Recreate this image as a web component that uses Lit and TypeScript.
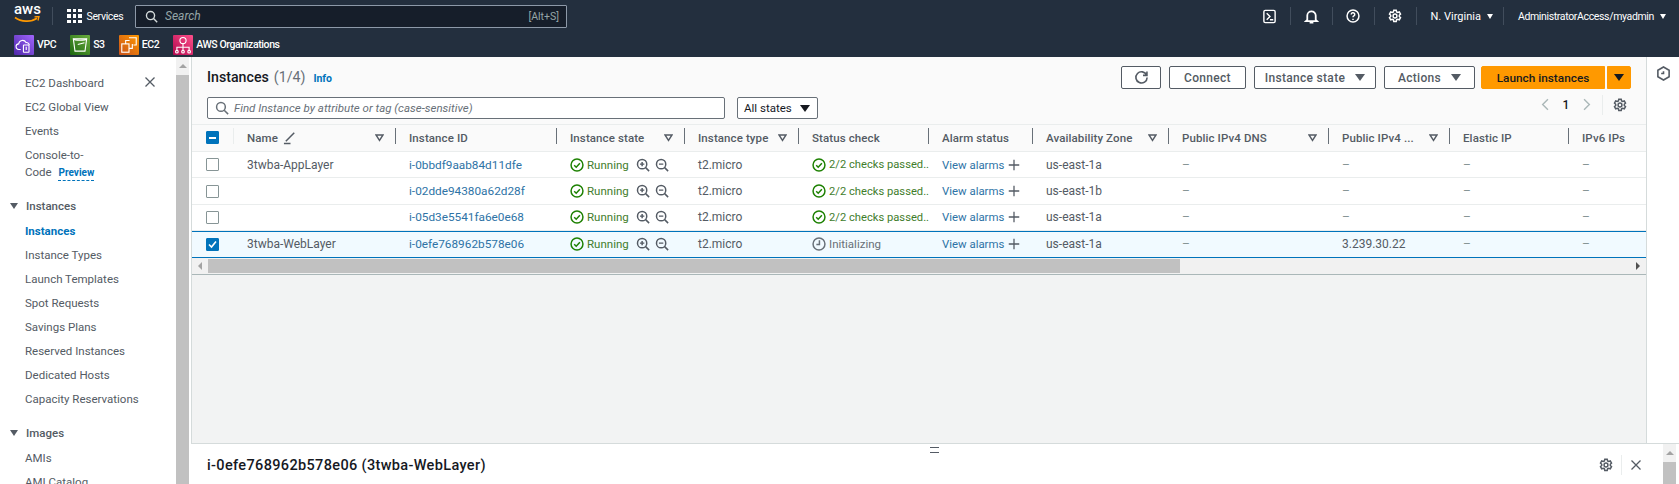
import { LitElement, css, html, svg } from "lit";
import { customElement } from "lit/decorators.js";

const icon = (body: unknown, size = 14, cls = "") => html`<svg class="ic ${cls}" width=${size} height=${size} viewBox="0 0 16 16" fill="none" stroke="currentColor" stroke-width="1.7">${body}</svg>`;

const gear = svg`<circle cx="8" cy="8" r="2.2"/><path d="M6.6 1.5h2.8l.4 1.8 1.3.7 1.8-.6 1.4 2.4-1.4 1.3v1.5l1.4 1.2-1.4 2.5-1.8-.6-1.3.7-.4 1.8H6.6l-.4-1.8-1.3-.7-1.8.6-1.4-2.5 1.4-1.2V7.100L1.700 5.800l1.400-2.400 1.800.6 1.300-.7z"/>`;
const close = svg`<path d="M2 2l12 12M14 2L2 14"/>`;
const search = svg`<circle cx="6.800" cy="6.800" r="5"/><path d="M10.500 10.500L15 15"/>`;
const checkCircle = svg`<circle cx="8" cy="8" r="6.800"/><path d="M4.800 8.200l2.300 2.300 4.200-4.600"/>`;
const zoomIn = svg`<circle cx="7" cy="7" r="5.300"/><path d="M11 11l4 4M4.500 7h5M7 4.500v5"/>`;
const zoomOut = svg`<circle cx="7" cy="7" r="5.300"/><path d="M11 11l4 4M4.500 7h5"/>`;
const clock = svg`<circle cx="8" cy="8" r="6.800"/><path d="M8.500 3.800v4.700H5"/>`;
const plus = svg`<path d="M8 1v14M1 8h14"/>`;

const navLeft = [
  { name: "VPC", cls: "vpc", glyph: svg`<path d="M6 13H4.500a2.500 2.500 0 0 1-.3-5 3.500 3.500 0 0 1 6.600-1.200 2.600 2.600 0 0 1 3 2.200"/><rect x="8.500" y="9" width="5" height="6.500" rx=".5"/><path d="M11 10.500v3"/>` },
  { name: "S3", cls: "s3", glyph: svg`<path d="M3 3.500h12l-1.500 11h-9z"/><path d="M3 3.500c1 1.600 11 1.600 12 0M7 8.500l6-1.500"/>` },
  { name: "EC2", cls: "ec2", glyph: svg`<rect x="2.500" y="8" width="6.500" height="7.500"/><path d="M6 8V5h3.500M9 12h3V8M9 2.500h6.500V9H13"/>` },
  { name: "AWS Organizations", cls: "org", glyph: svg`<circle cx="9" cy="5" r="2.800"/><path d="M9 8v3M3.500 14v-3h11v3M9 11v3"/><circle cx="3.500" cy="15" r="1.200"/><circle cx="9" cy="15" r="1.200"/><circle cx="14.500" cy="15" r="1.200"/>` },
];

const sideTop = ["EC2 Dashboard", "EC2 Global View", "Events"];
const sideInstances = ["Instance Types", "Launch Templates", "Spot Requests", "Savings Plans", "Reserved Instances", "Dedicated Hosts", "Capacity Reservations"];

const columns = [
  { label: "Name", sort: true, edit: true },
  { label: "Instance ID" },
  { label: "Instance state", sort: true },
  { label: "Instance type", sort: true },
  { label: "Status check" },
  { label: "Alarm status" },
  { label: "Availability Zone", sort: true },
  { label: "Public IPv4 DNS", sort: true },
  { label: "Public IPv4 ...", sort: true },
  { label: "Elastic IP" },
  { label: "IPv6 IPs", last: true },
];

const rows = [
  { name: "3twba-AppLayer", id: "i-0bbdf9aab84d11dfe", zone: "us-east-1a", ip: "–" },
  { name: "", id: "i-02dde94380a62d28f", zone: "us-east-1b", ip: "–" },
  { name: "", id: "i-05d3e5541fa6e0e68", zone: "us-east-1a", ip: "–" },
  { name: "3twba-WebLayer", id: "i-0efe768962b578e06", zone: "us-east-1a", ip: "3.239.30.22", selected: true },
];

@customElement("app-root")
export class AppRoot extends LitElement {
  static styles = css`
    :host {
      display: flex;
      flex-direction: column;
      height: 100vh;
      overflow: hidden;
      font-family: Roboto, "Liberation Sans", sans-serif;
      font-size: 12px;
      color: #545b64;
      background: #fff;
    }
    .ic { flex: none; display: block; }

    /* top nav */
    .nav { height: 57px; flex: none; background: #232f3e; color: #fff; font-size: 10.5px; letter-spacing: -0.35px; }
    .nav-main { height: 32px; display: flex; align-items: center; padding-left: 14px; }
    .logo { width: 27px; height: 26px; display: flex; flex-direction: column; align-items: center; margin-top: -4px; }
    .logo span { font: 500 15px/16px Roboto, sans-serif; letter-spacing: 0; }
    .logo svg { margin-top: -1px; }
    .nav-sep { width: 1px; height: 18px; background: #414d5c; flex: none; }
    .services { display: flex; align-items: center; gap: 5px; margin-left: 14px; width: 68px; }
    .dots { display: grid; grid-template-columns: repeat(3, 3.500px); gap: 2px; }
    .dots i { height: 3.500px; background: #fff; }
    .nav-search {
      width: 432px; height: 23px; box-sizing: border-box; border: 1px solid #8d99a8; background: #161e2a;
      display: flex; align-items: center; padding: 0 7px 0 9px; color: #95a5a6; border-radius: 1px; letter-spacing: 0;
    }
    .nav-search svg { color: #d5dbdb; margin-right: 7px; }
    .nav-search em { flex: 1; font-size: 12px; }
    .nav-tools { margin-left: auto; display: flex; align-items: center; height: 100%; padding-right: 13px; }
    .tool { width: 41px; display: flex; justify-content: center; }
    .caret { width: 0; height: 0; border: 3.500px solid transparent; border-top: 5px solid currentColor; border-bottom: 0; display: inline-block; flex: none; }
    .region { display: flex; align-items: center; gap: 6px; padding: 0 0 0 14px; }
    .region.virginia { font-size: 11px; letter-spacing: 0; padding-right: 10px; }
    .nav-fav { height: 25px; display: flex; align-items: center; padding-left: 14px; font-weight: 500; letter-spacing: -0.4px; }
    .fav { display: flex; align-items: center; gap: 3px; margin-right: 14px; }
    .svc { width: 20px; height: 20px; display: block; border-radius: 1px; }
    .vpc { background: linear-gradient(45deg, #4d27a8, #a166ff); }
    .s3 { background: linear-gradient(45deg, #1b660f, #6cae3e); }
    .ec2 { background: linear-gradient(45deg, #c8511b, #f90); }
    .org { background: linear-gradient(45deg, #b0084d, #ff4f8b); }

    /* page */
    .page { flex: 1; min-height: 0; display: flex; }
    .side { width: 176px; flex: none; position: relative; padding-top: 13.500px; box-sizing: border-box; overflow: hidden; font-size: 11.5px; }
    .side-close { position: absolute; left: 144px; top: 19px; color: #545b64; }
    .side-item { height: 24px; line-height: 24px; padding-left: 25px; white-space: nowrap; }
    .console { line-height: 17px; height: 34px; margin: 4px 0 13px; white-space: normal; }
    .preview { color: #0073bb; font-weight: 700; font-size: 10px; margin-left: 4px; border-bottom: 1px dashed #0073bb; padding-bottom: 2px; }
    .group { display: flex; align-items: center; height: 24px; font-weight: 500; gap: 8px; padding-left: 10px; }
    .group .caret { color: #545b64; border-width: 4px; border-top-width: 6px; }
    .group-gap { margin-top: 10px; }
    .active { color: #0073bb; font-weight: 700; margin-top: 1px; }
    .vbar { width: 13px; flex: none; background: #f1f1f1; display: flex; flex-direction: column; }
    .vbar .up { height: 18px; flex: none; display: flex; align-items: center; justify-content: center; }
    .vbar .up i { border: 4px solid transparent; border-bottom: 4px solid #a3a3a3; border-top: 0; }
    .vbar .thumb { flex: 1; background: #c1c1c1; }
    .side-bar { margin-right: 2px; }

    .content { flex: 1; min-width: 0; display: flex; flex-direction: column; }
    .upper { flex: 1; min-height: 0; display: flex; }
    .main { flex: 1; min-width: 0; display: flex; flex-direction: column; background: #f2f3f3; border-left: 1px solid #d5dbdb; border-right: 1px solid #d5dbdb; }
    .rail { width: 32px; flex: none; display: flex; justify-content: center; padding-top: 9px; box-sizing: border-box; color: #545b64; }

    .head { background: #fafafa; padding: 9px 15px 5px 15px; height: 67px; box-sizing: border-box; flex: none; }
    .head-top { display: flex; align-items: flex-start; }
    .title { font-size: 14.2px; font-weight: 500; color: #16191f; display: flex; align-items: baseline; gap: 8px; margin-top: 3px; }
    .title span { font-weight: 400; color: #687078; margin-left: -3px; }
    .title a { font-size: 10.5px; font-weight: 700; color: #0073bb; }
    .actions { margin-left: auto; display: flex; gap: 8px; }
    .btn {
      height: 23px; box-sizing: border-box; border: 1px solid #545b64; border-radius: 2px; background: #fff; color: #545b64;
      display: flex; align-items: center; justify-content: center; gap: 10px; font-weight: 500; font-size: 12px; letter-spacing: 0.3px;
    }
    .btn .caret { border-width: 5px; border-top-width: 7px; }
    .refresh { width: 40px; }
    .connect { width: 77px; }
    .state { width: 122px; }
    .act { width: 91px; }
    .split-btn { display: flex; gap: 2px; margin-left: -2px; }
    .primary { background: #f90; border-color: #f90; color: #16191f; }
    .launch { width: 124px; border-radius: 2px 0 0 2px; font-size: 11.8px; letter-spacing: 0; }
    .drop { width: 24px; border-radius: 0 2px 2px 0; }
    .head-bottom { display: flex; align-items: center; margin-top: 8px; }
    .filter {
      width: 518px; height: 22px; box-sizing: border-box; border: 1px solid #687078; background: #fff; border-radius: 2px;
      display: flex; align-items: center; gap: 5px; padding-left: 7px; color: #687078; font-size: 11.5px;
    }
    .select {
      width: 81px; height: 22px; box-sizing: border-box; margin-left: 12px; border: 1px solid #687078; background: #fff; border-radius: 2px;
      display: flex; align-items: center; gap: 8px; padding-left: 6px; color: #16191f; font-size: 11.5px;
    }
    .select .caret { border-width: 5px; border-top-width: 7px; color: #16191f; }
    .pager { margin-left: auto; margin-right: 4px; display: flex; align-items: center; color: #545b64; margin-top: -7px; }
    .pager .dim { color: #aab7b8; }
    .pager b { width: 14px; margin: 0 7px; text-align: center; color: #16191f; font-size: 12px; font-weight: 500; }
    .pager .pg-sep { width: 1px; height: 20px; background: #eaeded; margin: 0 10px 0 9px; }

    .row {
      display: grid;
      grid-template-columns: 42px 162px 161px 128px 114px 130px 104px 136px 160px 121px 119px 77px;
      background: #fff;
      border-bottom: 1px solid #eaeded;
      height: 26.4px;
      box-sizing: border-box;
      flex: none;
    }
    .row.hdr { height: 28px; background: #fafafa; border-top: 1px solid #eaeded; font-weight: 500; border-bottom: 1px solid #eaeded; font-size: 11.5px; letter-spacing: 0.1px; }
    .row.sel { background: #f1faff; border-top: 1px solid #0073bb; border-bottom: 1px solid #0073bb; }
    .cell { display: flex; align-items: center; padding-left: 13px; min-width: 0; white-space: nowrap; overflow: hidden; }
    .hdr .cell::after { content: ""; margin-left: auto; width: 1px; height: 16px; background: #687078; flex: none; }
    .hdr .cell > * { margin-top: 3px; }
    .hdr .cell.last::after { display: none; }
    .hdr .cell.pick::after { background: #eaeded; }
    .pick { padding-left: 14px; }
    .sort { margin-left: auto; margin-right: 11px; color: #545b64; }
    .hdr .cell.sorted::after { margin-left: 0; }
    .edit { margin-left: 5px; }
    .box { width: 11px; height: 11px; border: 1px solid #879596; border-radius: 1px; background: #fff; display: block; }
    .box.on { background: #0073bb; border-color: #0073bb; color: #fff; display: flex; align-items: center; justify-content: center; }
    .link { color: #2e73a6; }
    .id { font-size: 11.8px; }
    .alarms { font-size: 11.4px; }
    .ok-text { color: #3f7d2c; margin-left: 3px; font-size: 11.5px; }
    .checks { font-size: 11.2px; }
    .ok-icon { color: #1d8102; }
    .mag { margin-left: 7px; color: #545b64; }
    .mag + .mag { margin-left: 5px; }
    .pending { color: #687078; }
    .pending span { margin-left: 3px; font-size: 11.5px; }
    .add { margin-left: 4px; color: #545b64; }
    .dash { color: #879596; }

    .hbar { height: 17px; flex: none; display: flex; background: #f1f1f1; border-bottom: 1px solid #aab7b8; box-sizing: border-box; padding-top: 1px; align-items: stretch; }
    .hbar .end { width: 16px; display: flex; align-items: center; justify-content: center; flex: none; }
    .hbar .thumb { width: 972px; background: #c1c1c1; height: 14px; }
    .hbar .fill { flex: 1; }
    .arrow-l { border: 4px solid transparent; border-right: 4px solid #a3a3a3; border-left: 0; }
    .arrow-r { border: 4px solid transparent; border-left: 4px solid #505050; border-right: 0; }

    .split { height: 41px; flex: none; background: #fff; border-top: 1px solid #d5dbdb; display: flex; position: relative; box-sizing: border-box; }
    .split-title { font-size: 14.5px; font-weight: 500; color: #16191f; padding: 13px 0 0 16px; letter-spacing: 0.35px; }
    .handle { position: absolute; left: 739px; top: 3px; width: 9px; height: 4px; border-top: 1.500px solid #545b64; border-bottom: 1.500px solid #545b64; }
    .split-tools { margin-left: auto; display: flex; align-items: center; height: 30px; margin-top: 6px; color: #545b64; }
    .split-tools .v { width: 1px; height: 20px; background: #eaeded; margin: 0 8px 0 8px; }
    .split-tools .x { margin-right: 21px; }
    .split .vbar { margin-right: 3px; }
  `;

  private renderNav() {
    return html`
      <header class="nav">
        <div class="nav-main">
          <div class="logo">
            <span>aws</span>
            <svg width="27" height="8" viewBox="0 0 27 8" fill="none"><path d="M1 1.500c6 4.500 16 5 22 .8" stroke="#f90" stroke-width="1.700"/><path d="M20.500 .8l4.500-.3-1 4" stroke="#f90" stroke-width="1.300"/></svg>
          </div>
          <div class="nav-sep" style="margin-left:11px"></div>
          <div class="services"><span class="dots">${Array.from({ length: 9 }, () => html`<i></i>`)}</span>Services</div>
          <div class="nav-search">${icon(search, 13)}<em>Search</em><span>[Alt+S]</span></div>
          <div class="nav-tools">
            <div class="tool">${icon(svg`<rect x="2" y="1.500" width="12" height="13" rx="1.500" stroke-width="1.500"/><path d="M5 4.500l3.500 3.500L5 11.500M8.500 11.500H12" stroke-width="1.500"/>`, 15)}</div>
            <div class="nav-sep"></div>
            <div class="tool">${icon(svg`<path d="M8 1.500v1M3.500 11.500V7a4.500 4.500 0 0 1 9 0v4.500l1.500 1.500H2zM6 14.500h4" stroke-width="1.900"/>`, 15)}</div>
            <div class="nav-sep"></div>
            <div class="tool">${icon(svg`<circle cx="8" cy="8" r="6.800"/><path d="M6 6.200a2 2 0 1 1 3 1.700c-.7.400-1 .8-1 1.600M8 11v1.500"/>`, 14)}</div>
            <div class="nav-sep"></div>
            <div class="tool">${icon(gear, 14)}</div>
            <div class="nav-sep"></div>
            <div class="region virginia">N. Virginia <span class="caret"></span></div>
            <div class="nav-sep"></div>
            <div class="region">AdministratorAccess/myadmin <span class="caret"></span></div>
          </div>
        </div>
        <div class="nav-fav">
          ${navLeft.map(s => html`
            <div class="fav">
              <svg class="svc ${s.cls}" viewBox="0 0 18 18" fill="none" stroke="#fff" stroke-width="1">${s.glyph}</svg>
              ${s.name}
            </div>`)}
        </div>
      </header>`;
  }

  private renderSide() {
    return html`
      <nav class="side">
        <div class="side-close">${icon(close, 12)}</div>
        ${sideTop.map(t => html`<div class="side-item">${t}</div>`)}
        <div class="side-item console">Console-to-<br />Code <span class="preview">Preview</span></div>
        <div class="group"><span class="caret"></span>Instances</div>
        <div class="side-item active">Instances</div>
        ${sideInstances.map(t => html`<div class="side-item">${t}</div>`)}
        <div class="group group-gap"><span class="caret"></span>Images</div>
        <div class="side-item" style="margin-top:1px">AMIs</div>
        <div class="side-item">AMI Catalog</div>
      </nav>
      <div class="vbar side-bar"><div class="up"><i></i></div><div class="thumb"></div></div>`;
  }

  private renderHead() {
    return html`
      <div class="head">
        <div class="head-top">
          <div class="title">Instances <span>(1/4)</span> <a>Info</a></div>
          <div class="actions">
            <div class="btn refresh">${icon(svg`<path d="M13.500 5.500A6 6 0 1 0 14 8M13.800 1.500v4.200H9.600"/>`, 15)}</div>
            <div class="btn connect">Connect</div>
            <div class="btn state">Instance state <span class="caret"></span></div>
            <div class="btn act">Actions <span class="caret"></span></div>
            <div class="split-btn">
              <div class="btn primary launch">Launch instances</div>
              <div class="btn primary drop"><span class="caret"></span></div>
            </div>
          </div>
        </div>
        <div class="head-bottom">
          <div class="filter">${icon(search, 14)}<em>Find Instance by attribute or tag (case-sensitive)</em></div>
          <div class="select">All states <span class="caret"></span></div>
          <div class="pager">
            ${icon(svg`<path d="M11 1.500L4.500 8l6.500 6.500"/>`, 13, "dim")}
            <b>1</b>
            ${icon(svg`<path d="M5 1.500L11.500 8 5 14.500"/>`, 13, "dim")}
            <span class="pg-sep"></span>
            ${icon(gear, 14)}
          </div>
        </div>
      </div>`;
  }

  private renderTable() {
    return html`
      <div class="row hdr">
        <div class="cell pick"><span class="box on"><svg width="7" height="2"><rect width="7" height="2" fill="#fff"/></svg></span></div>
        ${columns.map(c => html`
          <div class="cell ${c.last ? "last" : ""} ${c.sort ? "sorted" : ""}">
            <span>${c.label}</span>
            ${c.edit ? icon(svg`<path d="M3 12L12 3M1 14.500h7" stroke-width="1.600"/>`, 15, "edit") : ""}
            ${c.sort ? html`<svg class="sort" width="9" height="8" viewBox="0 0 9 8" fill="none" stroke="currentColor" stroke-width="1.400"><path d="M1 1h7L4.500 6.500z"/></svg>` : ""}
          </div>`)}
        <div class="cell last"></div>
      </div>
      ${rows.map(r => html`
        <div class="row ${r.selected ? "sel" : ""}">
          <div class="cell pick">
            ${r.selected
              ? html`<span class="box on"><svg width="9" height="9" viewBox="0 0 9 9" fill="none" stroke="#fff" stroke-width="1.600"><path d="M1 4.500l2.500 2.500L8 1.500"/></svg></span>`
              : html`<span class="box"></span>`}
          </div>
          <div class="cell">${r.name}</div>
          <div class="cell link id">${r.id}</div>
          <div class="cell">
            ${icon(checkCircle, 14, "ok-icon")}<span class="ok-text">Running</span>
            ${icon(zoomIn, 14, "mag")}${icon(zoomOut, 14, "mag")}
          </div>
          <div class="cell">t2.micro</div>
          ${r.selected
            ? html`<div class="cell pending">${icon(clock, 14)}<span>Initializing</span></div>`
            : html`<div class="cell">${icon(checkCircle, 14, "ok-icon")}<span class="ok-text checks">2/2 checks passed..</span></div>`}
          <div class="cell"><span class="link alarms">View alarms</span>${icon(plus, 12, "add")}</div>
          <div class="cell">${r.zone}</div>
          <div class="cell dash">–</div>
          <div class="cell ${r.selected ? "" : "dash"}">${r.ip}</div>
          <div class="cell dash">–</div>
          <div class="cell dash">–</div>
        </div>`)}
      <div class="hbar">
        <div class="end"><i class="arrow-l"></i></div>
        <div class="thumb"></div>
        <div class="fill"></div>
        <div class="end"><i class="arrow-r"></i></div>
      </div>`;
  }

  render() {
    return html`
      ${this.renderNav()}
      <div class="page">
        ${this.renderSide()}
        <div class="content">
          <div class="upper">
            <main class="main">
              ${this.renderHead()}
              ${this.renderTable()}
            </main>
            <aside class="rail">${icon(svg`<path d="M8 1l6 3.500v7L8 15l-6-3.500v-7z"/><path d="M5.500 8H8V5.500" />`, 15)}</aside>
          </div>
          <section class="split">
            <div class="handle"></div>
            <div class="split-title">i-0efe768962b578e06 (3twba-WebLayer)</div>
            <div class="split-tools">
              ${icon(gear, 14)}
              <span class="v"></span>
              <span class="x">${icon(close, 12)}</span>
            </div>
            <div class="vbar"><div class="up"><i></i></div><div class="thumb"></div></div>
          </section>
        </div>
      </div>`;
  }
}
